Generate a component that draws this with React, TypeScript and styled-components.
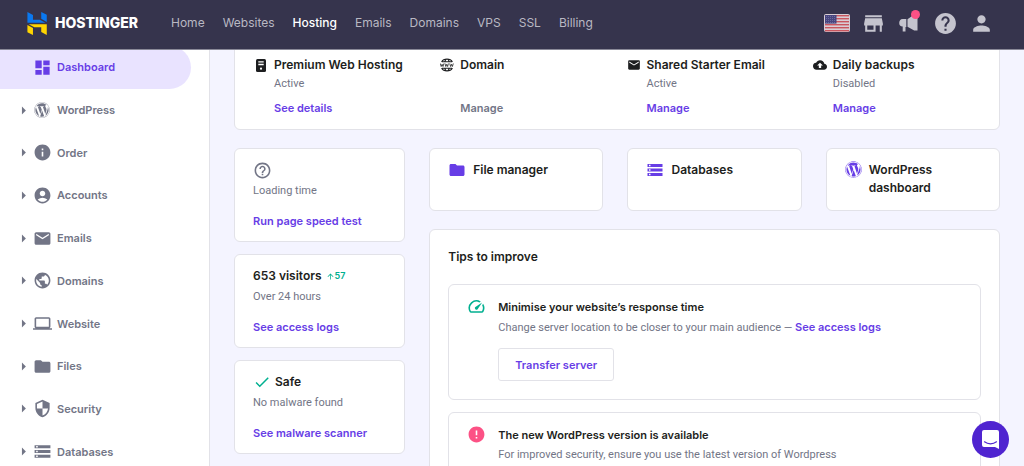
import React from "react";
import styled, { createGlobalStyle } from "styled-components";
import {
  MdDashboard, MdInfo, MdAccountCircle, MdEmail, MdPublic, MdLaptop, MdFolder, MdSecurity, MdStorage,
  MdArrowRight, MdStore, MdHelp, MdPerson, MdHelpOutline, MdCheck, MdError, MdBackup, MdSpeed, MdArrowUpward,
} from "react-icons/md";
import { FaWordpress } from "react-icons/fa";

const violet = "#673de6";
const ink = "#1d1e20";
const muted = "#727586";
const line = "#e2e2e8";
const green = "#00b090";
const pink = "#fc5185";

const Global = createGlobalStyle`
  *, *::before, *::after { box-sizing: border-box; }
  body { margin: 0; font-family: Inter, "Liberation Sans", sans-serif; font-size: 11px; line-height: 20px; color: ${muted}; background: #f4f4ff; }
  h2, h3, p, ul { margin: 0; padding: 0; font-size: inherit; font-weight: inherit; }
  ul { list-style: none; }
  a { text-decoration: none; color: inherit; }
  button { font: inherit; cursor: pointer; }
  svg { display: block; flex: none; }
`;

const Shell = styled.div`
  height: 100vh;
  display: flex;
  flex-direction: column;
  overflow: hidden;
`;

const Header = styled.header`
  flex: none;
  display: flex;
  align-items: center;
  height: 49px;
  padding: 0 30px 3px 25px;
  background: #36344d;
  box-shadow: 0 1px 0 #8a8998;
  position: relative;
  z-index: 1;
`;

const Brand = styled.a`
  display: flex;
  align-items: center;
  gap: 6px;
  width: 146px;
  color: #fff;
  font-size: 14px;
  font-weight: 800;
`;

const TopNav = styled.nav`
  display: flex;
  gap: 18px;
  flex: 1;
`;

const TopLink = styled.a<{ $active?: boolean }>`
  font-size: 12px;
  font-weight: ${(p) => (p.$active ? 500 : 400)};
  color: ${(p) => (p.$active ? "#fff" : "#b9b8c3")};
`;

const Tools = styled.div`
  display: flex;
  align-items: center;
  gap: 10px;
`;

const Tool = styled.button`
  display: grid;
  place-items: center;
  width: 26px;
  height: 26px;
  padding: 0;
  border: 0;
  background: none;
  color: #c5c4ce;
  position: relative;
`;

const Dot = styled.span`
  position: absolute;
  top: 0;
  right: 2px;
  width: 9px;
  height: 9px;
  border-radius: 50%;
  background: ${pink};
`;

const Body = styled.div`
  flex: 1;
  min-height: 0;
  display: flex;
  overflow: hidden;
`;

const Sidebar = styled.nav`
  flex: none;
  width: 210px;
  background: #fff;
  border-right: 1px solid ${line};
`;

const Menu = styled.ul`
  display: grid;
  grid-template-rows: repeat(10, 1fr);
  min-height: 427px;
  margin-top: -3px;
`;

const MenuLink = styled.a<{ $active?: boolean }>`
  display: flex;
  align-items: center;
  height: 100%;
  margin-right: 18px;
  padding-left: 14px;
  border-radius: 0 22px 22px 0;
  font-weight: 600;
  color: ${(p) => (p.$active ? violet : muted)};
  background: ${(p) => (p.$active ? "#e9e3ff" : "none")};
`;

const Caret = styled.span`
  width: 18px;
`;

const MenuIcon = styled.span`
  display: grid;
  place-items: center;
  width: 20px;
  margin-right: 5px;
`;

const Content = styled.main`
  flex: 1;
  min-width: 0;
  padding: 0 24px;
`;

const Card = styled.section`
  background: #fff;
  border: 1px solid ${line};
  border-radius: 6px;
`;

const PlanCard = styled(Card)`
  display: grid;
  grid-template-columns: repeat(4, minmax(0, 1fr));
  margin: -16px 0 18px;
  padding: 20px 0 11px 19px;
`;

const Plan = styled.div`
  display: flex;
  gap: 6px;
`;

const PlanIcon = styled.span`
  display: grid;
  place-items: center;
  width: 14px;
  height: 22px;
  color: ${ink};
`;

const Title = styled.h2`
  display: flex;
  align-items: center;
  gap: 4px;
  height: 22px;
  color: ${ink};
  font-size: 12px;
  font-weight: 600;
`;

const Sub = styled.p<{ $tight?: boolean }>`
  height: ${(p) => (p.$tight ? 16 : 20)}px;
  line-height: ${(p) => (p.$tight ? 16 : 20)}px;
  font-family: Roboto, "Liberation Sans", sans-serif;
`;

const Link = styled.a<{ $off?: boolean }>`
  font-family: Inter, "Liberation Sans", sans-serif;
  font-weight: 600;
  color: ${(p) => (p.$off ? muted : violet)};
`;

const LinkRow = styled.p<{ $tight?: boolean }>`
  padding-top: ${(p) => (p.$tight ? 6 : 10)}px;
`;

const Columns = styled.div`
  display: grid;
  grid-template-columns: minmax(0, 3fr) minmax(0, 10fr);
  gap: 24px;
  align-items: start;
`;

const Stack = styled.div<{ $gap: number }>`
  display: grid;
  gap: ${(p) => p.$gap}px;
`;

const StatCard = styled(Card)`
  padding: 10px 18px;
`;

const Trend = styled.span`
  display: flex;
  align-items: center;
  font-size: 9px;
  font-weight: 600;
  color: ${green};
`;

const Shortcuts = styled.div`
  display: grid;
  grid-template-columns: repeat(3, minmax(0, 1fr));
  gap: 24px;
`;

const Shortcut = styled(Card).attrs({ as: "a" })`
  display: flex;
  align-items: flex-start;
  gap: 7px;
  min-height: 63px;
  padding: 12px 48px 13px 18px;
  color: ${violet};
`;

const ShortcutText = styled.span`
  color: ${ink};
  font-size: 12px;
  font-weight: 600;
  line-height: 18px;
`;

const TipsCard = styled(Card)`
  padding: 16px 18px;
`;

const Tips = styled(Stack)`
  margin-top: 16px;
`;

const Tip = styled.article`
  display: flex;
  align-items: flex-start;
  gap: 12px;
  padding: 12px 18px 18px;
  border: 1px solid ${line};
  border-radius: 6px;
`;

const TipTitle = styled.h3`
  height: 20px;
  font-weight: 600;
  color: ${ink};
`;

const Outline = styled.button`
  display: block;
  margin-top: 11px;
  height: 33px;
  padding: 0 16px;
  border: 1px solid ${line};
  border-radius: 3px;
  background: #fff;
  color: ${violet};
  font-weight: 600;
`;

const Chat = styled.button`
  position: fixed;
  right: 15px;
  bottom: 8px;
  display: grid;
  place-items: center;
  width: 37px;
  height: 37px;
  padding: 0;
  border: 0;
  border-radius: 50%;
  background: #4f24d0;
`;

const LogoMark = () => (
  <svg width="24" height="23" viewBox="0 0 24 24" aria-hidden="true">
    <path fill="#0a78f0" d="M16.415 0v7.16l5.785 3.384V2.949zM2 0v11.177h18.815L14.89 8.063l-7.104-.003V3.1z" />
    <path fill="#ffd500" d="M16.415 20.894v-4.918l-7.16-.005-5.88-3.134h18.824V24zM2 13.46v7.6l5.786 2.938V16.76z" />
  </svg>
);

const Flag = () => (
  <svg width="26" height="18" viewBox="0 0 26 18" aria-hidden="true">
    <rect width="26" height="18" rx="2" fill="#d9cdd4" />
    {[1, 4, 7, 10, 13, 16].map((y) => (
      <rect key={y} x="1" y={y} width="24" height="1.4" fill="#c9565f" />
    ))}
    <rect x="1" y="1" width="11.5" height="8.6" fill="#47457f" />
    {[2.5, 4.5, 6.5, 8.5].map((y) => (
      <path key={y} d={`M2 ${y}h10`} stroke="#8a88b4" strokeWidth=".7" strokeDasharray=".8 1.2" />
    ))}
  </svg>
);

const Megaphone = () => (
  <svg width="22" height="22" viewBox="0 0 22 22" fill="currentColor" aria-hidden="true">
    <path d="M9.500 7.200 16.200 2.400h3.300v16.200h-3.300l-6.700-3.800zM8.300 7v8h-.8v4.600H4.700V14.600C2.300 14.600 1.200 13 1.200 11S2.300 7 4.700 7z" />
  </svg>
);

const Server = () => (
  <svg width="10" height="13" viewBox="0 0 10 13" aria-hidden="true">
    <rect width="10" height="13" rx="1.5" fill={ink} />
    <path d="M2.300 2.200h5.400v1.400H2.300zM2.300 4.800h5.400v1.400H2.300z" fill="#fff" />
    <circle cx="5" cy="9.700" r="1.100" fill="#fff" />
  </svg>
);

const Www = () => (
  <svg width="14" height="14" viewBox="0 0 14 14" fill="none" stroke={ink} aria-hidden="true">
    <path d="M1.600 4C2.600 2 4.600 1 7 1s4.400 1 5.400 3M4.700 4C5.100 2.300 6 1 7 1s1.900 1.300 2.300 3M1.600 10C2.600 12 4.600 13 7 13s4.400-1 5.400-3M4.700 10c.4 1.700 1.300 3 2.300 3s1.900-1.300 2.300-3M2 3.700h10M2 10.300h10" strokeWidth="1.100" />
    <path d="m.3 5.500.9 3 .9-2.200.9 2.200.9-3m1.100 0 .8 3 .9-2.200.9 2.200.8-3m1.300 0 .9 3 .9-2.200.9 2.200.9-3" strokeWidth=".8" />
  </svg>
);

const ChatGlyph = () => (
  <svg width="19" height="21" viewBox="0 0 19 21" aria-hidden="true">
    <path d="M3 1h13a2 2 0 0 1 2 2v17l-4-2H3a2 2 0 0 1-2-2V3a2 2 0 0 1 2-2z" fill="#fff" />
    <path d="M3.500 12.800c3.500 2.700 8.500 2.700 12 0" fill="none" stroke="#4f24d0" strokeWidth="1.200" strokeLinecap="round" />
  </svg>
);

const topLinks = ["Home", "Websites", "Hosting", "Emails", "Domains", "VPS", "SSL", "Billing"];

const menu = [
  { label: "Dashboard", icon: <MdDashboard size={19} /> },
  { label: "WordPress", icon: <FaWordpress size={16} /> },
  { label: "Order", icon: <MdInfo size={19} /> },
  { label: "Accounts", icon: <MdAccountCircle size={19} /> },
  { label: "Emails", icon: <MdEmail size={19} /> },
  { label: "Domains", icon: <MdPublic size={19} /> },
  { label: "Website", icon: <MdLaptop size={19} /> },
  { label: "Files", icon: <MdFolder size={19} /> },
  { label: "Security", icon: <MdSecurity size={19} /> },
  { label: "Databases", icon: <MdStorage size={19} /> },
];

const plans = [
  { title: "Premium Web Hosting", status: "Active", link: "See details", icon: <Server /> },
  { title: "Domain", status: "", link: "Manage", off: true, icon: <Www /> },
  { title: "Shared Starter Email", status: "Active", link: "Manage", icon: <MdEmail size={14} /> },
  { title: "Daily backups", status: "Disabled", link: "Manage", icon: <MdBackup size={14} /> },
];

export default function App() {
  return (
    <>
      <Global />
      <Shell>
        <Header>
          <Brand href="#"><LogoMark />HOSTINGER</Brand>
          <TopNav aria-label="Main">
            {topLinks.map((t) => (
              <TopLink key={t} href="#" $active={t === "Hosting"}>{t}</TopLink>
            ))}
          </TopNav>
          <Tools>
            <Tool aria-label="Language"><Flag /></Tool>
            <Tool aria-label="Store"><MdStore size={25} /></Tool>
            <Tool aria-label="News"><Megaphone /><Dot /></Tool>
            <Tool aria-label="Help"><MdHelp size={25} /></Tool>
            <Tool aria-label="Profile"><MdPerson size={25} /></Tool>
          </Tools>
        </Header>
        <Body>
          <Sidebar aria-label="Hosting">
            <Menu>
              {menu.map((m, i) => (
                <li key={m.label}>
                  <MenuLink href="#" $active={i === 0}>
                    <Caret>{i > 0 && <MdArrowRight size={19} />}</Caret>
                    <MenuIcon>{m.icon}</MenuIcon>
                    {m.label}
                  </MenuLink>
                </li>
              ))}
            </Menu>
          </Sidebar>
          <Content>
            <PlanCard>
              {plans.map((p) => (
                <Plan key={p.title}>
                  <PlanIcon>{p.icon}</PlanIcon>
                  <div>
                    <Title>{p.title}</Title>
                    <Sub $tight>{p.status}</Sub>
                    <LinkRow $tight><Link href="#" $off={p.off}>{p.link}</Link></LinkRow>
                  </div>
                </Plan>
              ))}
            </PlanCard>
            <Columns>
              <Stack $gap={12}>
                <StatCard>
                  <Title><MdHelpOutline size={19} color={muted} /></Title>
                  <Sub>Loading time</Sub>
                  <LinkRow><Link href="#">Run page speed test</Link></LinkRow>
                </StatCard>
                <StatCard>
                  <Title>653 visitors<Trend><MdArrowUpward size={9} />57</Trend></Title>
                  <Sub>Over 24 hours</Sub>
                  <LinkRow><Link href="#">See access logs</Link></LinkRow>
                </StatCard>
                <StatCard>
                  <Title><MdCheck size={18} color={green} />Safe</Title>
                  <Sub>No malware found</Sub>
                  <LinkRow><Link href="#">See malware scanner</Link></LinkRow>
                </StatCard>
              </Stack>
              <Stack $gap={18}>
                <Shortcuts>
                  <Shortcut href="#"><MdFolder size={18} /><ShortcutText>File manager</ShortcutText></Shortcut>
                  <Shortcut href="#"><MdStorage size={18} /><ShortcutText>Databases</ShortcutText></Shortcut>
                  <Shortcut href="#"><FaWordpress size={17} /><ShortcutText>WordPress dashboard</ShortcutText></Shortcut>
                </Shortcuts>
                <TipsCard>
                  <Title>Tips to improve</Title>
                  <Tips $gap={12}>
                    <Tip>
                      <MdSpeed size={19} color={green} />
                      <div>
                        <TipTitle>Minimise your website’s response time</TipTitle>
                        <Sub>Change server location to be closer to your main audience — <Link href="#">See access logs</Link></Sub>
                        <Outline>Transfer server</Outline>
                      </div>
                    </Tip>
                    <Tip>
                      <MdError size={19} color={pink} />
                      <div>
                        <TipTitle>The new WordPress version is available</TipTitle>
                        <Sub>For improved security, ensure you use the latest version of Wordpress</Sub>
                      </div>
                    </Tip>
                  </Tips>
                </TipsCard>
              </Stack>
            </Columns>
          </Content>
        </Body>
      </Shell>
      <Chat aria-label="Open chat"><ChatGlyph /></Chat>
    </>
  );
}
